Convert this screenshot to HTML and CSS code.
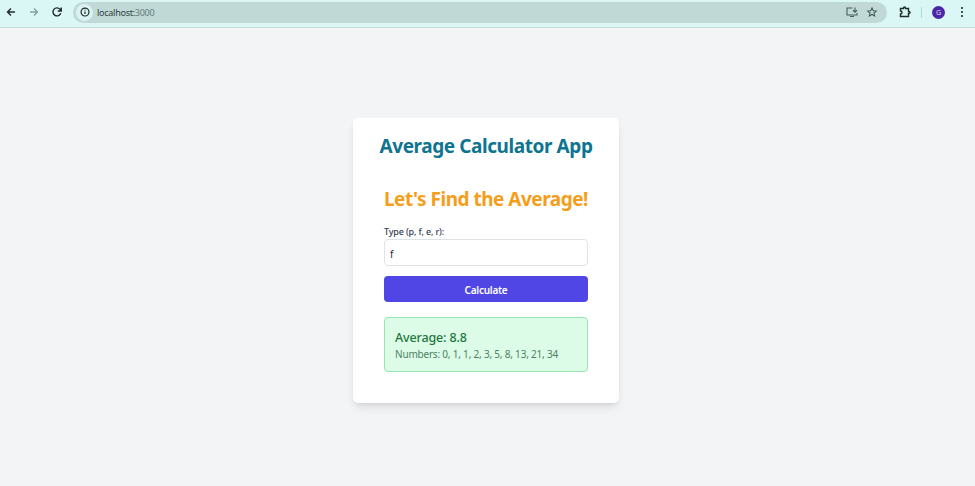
FILE: index.html
```html
<!DOCTYPE html>
<html lang="en">
<head>
<meta charset="utf-8">
<title>Average Calculator App</title>
<link rel="stylesheet" href="styles.css">
</head>
<body>
<header class="toolbar">
  <svg class="icon back" viewBox="0 0 24 24"><path d="M20 12H5M12 5l-7 7 7 7"/></svg>
  <svg class="icon forward" viewBox="0 0 24 24"><path d="M4 12h15M12 5l7 7-7 7"/></svg>
  <svg class="icon reload" viewBox="0 0 24 24"><path d="M19.500 14.500A8 8 0 1 1 18 6.500L20 9M20.500 3v7h-7"/></svg>
  <div class="address">
    <span class="site-info"><svg class="icon" viewBox="0 0 24 24"><circle cx="12" cy="12" r="9.500"/><path d="M12 11v6M12 6.500v2"/></svg></span>
    <span class="url">localhost:<span class="port">3000</span></span>
    <svg class="icon install" viewBox="0 0 24 24"><path d="M13 4H2v14h20v-4M8 21h8M18 3v9M14 8.500l4 4 4-4"/></svg>
    <svg class="icon star" viewBox="0 0 24 24"><path d="M12 4l2.500 5.500 6 .6-4.500 4 1.300 5.900L12 17l-5.300 3 1.300-5.900-4.500-4 6-.6z"/></svg>
  </div>
  <svg class="icon puzzle" viewBox="0 0 24 24"><path d="M3 5h6V4a2 2 0 0 1 4 0v1h6v6h1a2 2 0 0 1 0 4h-1v6H3v-5c4 0 4-6 0-6z"/></svg>
  <span class="divider"></span>
  <span class="avatar">G</span>
  <svg class="menu" viewBox="0 0 4 12"><circle cx="2" cy="2" r="1.050"/><circle cx="2" cy="6" r="1.050"/><circle cx="2" cy="10" r="1.050"/></svg>
</header>
<main class="page">
  <section class="card">
    <h1 class="title"><span>Average Calculator App</span></h1>
    <h2 class="subtitle">Let's Find the Average!</h2>
    <label class="label" for="type">Type (p, f, e, r):</label>
    <input class="field" id="type" value="f">
    <button class="submit">Calculate</button>
    <div class="result">
      <p class="average">Average: 8.8</p>
      <p class="numbers">Numbers: 0, 1, 1, 2, 3, 5, 8, 13, 21, 34</p>
    </div>
  </section>
</main>
</body>
</html>
```
FILE: styles.css
```css
* { box-sizing: border-box; }
body {
  margin: 0;
  height: 486px;
  display: flex;
  flex-direction: column;
  overflow: hidden;
  background: #f3f4f6;
  font-family: "Noto Sans", "Open Sans", sans-serif;
}
h1, h2, p { margin: 0; white-space: nowrap; }
.toolbar {
  height: 28px;
  flex: none;
  display: flex;
  align-items: center;
  padding: 0 11px 3px 5px;
  background: #daf6f5;
  border-bottom: 1px solid #c9dddd;
}
.icon {
  width: 12px;
  height: 12px;
  flex: none;
  fill: none;
  stroke: #1d2b2b;
  stroke-width: 2.8;
}
.forward { margin-left: 11px; stroke: #86a09f; }
.reload { margin-left: 11px; }
.address {
  height: 21px;
  width: 814px;
  margin-left: 10px;
  padding: 0 9px 0 3px;
  display: flex;
  align-items: center;
  border-radius: 11px;
  background: #c0d8d6;
}
.site-info {
  width: 17px;
  height: 17px;
  display: flex;
  align-items: center;
  justify-content: center;
  border-radius: 50%;
  background: #daf3f2;
}
.site-info .icon { width: 10px; height: 10px; }
.url { margin-left: 4px; font-size: 9px; letter-spacing: -0.26px; color: #2d4140; }
.port { color: #637b79; }
.install { margin-left: auto; stroke: #475c5b; stroke-width: 2.2; }
.star { margin-left: 8px; stroke: #475c5b; stroke-width: 2.2; }
.puzzle { margin-left: 12px; }
.divider { width: 1px; height: 11px; margin-left: 10px; background: #a5dedb; }
.avatar {
  width: 13px;
  height: 13px;
  margin-left: 10px;
  border-radius: 50%;
  background: #4b27a8;
  color: #e4dcf5;
  font-size: 7px;
  line-height: 13px;
  text-align: center;
}
.menu { width: 4px; height: 12px; margin-left: auto; fill: #1d2b2b; }
.page {
  flex: 1;
  display: flex;
  align-items: flex-start;
  justify-content: center;
  padding: 90px 3px 0 0;
}
.card {
  width: 266px;
  height: 284.500px;
  padding: 14px 31px 0;
  display: flex;
  flex-direction: column;
  border-radius: 5px;
  background: #fff;
  box-shadow: 0 6px 10px -2px #0000001a, 0 2px 4px -2px #0000001a;
}
.title, .subtitle { font-size: 19px; line-height: 28px; font-weight: 700; }
.title { display: flex; justify-content: center; letter-spacing: -0.42px; color: #0e7490; }
.subtitle { margin-top: 25px; letter-spacing: -0.5px; color: #f59e1b; }
.label { margin-top: 12px; font-size: 9px; line-height: 13px; font-weight: 500; letter-spacing: -0.15px; color: #374151; }
.field {
  height: 27px;
  margin-top: 1px;
  padding: 2px 5px 0;
  border: 1px solid #dfe2e6;
  border-radius: 4px;
  font: 10px "Noto Sans", sans-serif;
  color: #1f2937;
  outline: none;
}
.submit {
  height: 26px;
  margin-top: 10px;
  padding: 1px 0 0;
  border: 0;
  border-radius: 4px;
  background: #4f46e5;
  color: #fff;
  font: 600 10px "Noto Sans", sans-serif;
  letter-spacing: -0.25px;
}
.result {
  height: 55px;
  margin-top: 15px;
  padding: 11px 10px 0;
  border: 1px solid #97e6b3;
  border-radius: 4px;
  background: #dcfce7;
}
.average { font-size: 12.500px; line-height: 18px; font-weight: 500; letter-spacing: -0.14px; color: #1d763d; }
.numbers { font-size: 10px; line-height: 15px; letter-spacing: -0.2px; color: #4d8064; }
```
